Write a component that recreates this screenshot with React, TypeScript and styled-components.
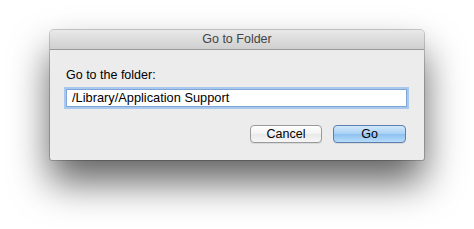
import React, { FC } from 'react'
import styled, { createGlobalStyle } from 'styled-components'

const Global = createGlobalStyle`
	html, body {
		margin: 0;
		padding: 0;
		background: #ffffff;
	}
	body {
		font-family: "Liberation Sans", Arial, sans-serif;
	}
`

const App: FC = () => {
	return (
		<Page>
			<Global />
			<Window>
				<TitleBar>Go to Folder</TitleBar>
				<Body>
					<Label>Go to the folder:</Label>
					<PathField>/Library/Application Support</PathField>
					<Buttons>
						<Button>Cancel</Button>
						<Button primary>Go</Button>
					</Buttons>
				</Body>
			</Window>
		</Page>
	)
}

export default App

const Page = styled.main`
	width: 474px;
	height: 229px;
	padding: 30px 0 0 50px;
	box-sizing: border-box;
	overflow: hidden;
`

const Window = styled.section`
	width: 374px;
	border-radius: 4px 4px 2px 2px;
	background: #ececec;
	box-shadow: 0 0 0 1px rgba(0, 0, 0, 0.2), 0 22px 38px rgba(0, 0, 0, 0.62);
	overflow: hidden;
`

const TitleBar = styled.header`
	height: 19px;
	line-height: 19px;
	text-align: center;
	font-size: 12.5px;
	color: #444;
	background: linear-gradient(#e9e9e9, #cfcfcf);
	border-bottom: 1px solid #999;
`

const Body = styled.div`
	display: flex;
	flex-direction: column;
	padding: 18px 17px 17px 16px;
`

const Label = styled.div`
	font-size: 12.5px;
	line-height: 14px;
	color: #000;
`

const PathField = styled.div`
	margin-top: 7px;
	height: 18px;
	box-sizing: border-box;
	padding: 0 5px;
	line-height: 16px;
	font-size: 12.8px;
	color: #000;
	background: #fff;
	border: 1px solid #7fa6d6;
	box-shadow: 0 0 0 2px #a9c8ee;
`

const Buttons = styled.div`
	display: flex;
	justify-content: flex-end;
	gap: 11px;
	margin-top: 18px;
`

const Button = styled.button<{ primary?: boolean }>`
	width: ${({ primary }) => (primary ? 73 : 72)}px;
	height: 18px;
	margin-right: ${({ primary }) => (primary ? 1 : 0)}px;
	padding: 0;
	font-family: inherit;
	font-size: 12.5px;
	color: #000;
	border-radius: 4px;
	border: 1px solid ${({ primary }) => (primary ? '#5d7fae' : '#9a9a9a')};
	background: ${({ primary }) =>
		primary
			? 'linear-gradient(#d3e8fb, #a7d0f5 50%, #8dc0f0 51%, #b7dcfa)'
			: 'linear-gradient(#ffffff, #f2f2f2 50%, #e9e9e9 51%, #f6f6f6)'};
	box-shadow: 0 1px 0 rgba(0, 0, 0, 0.08);
`
